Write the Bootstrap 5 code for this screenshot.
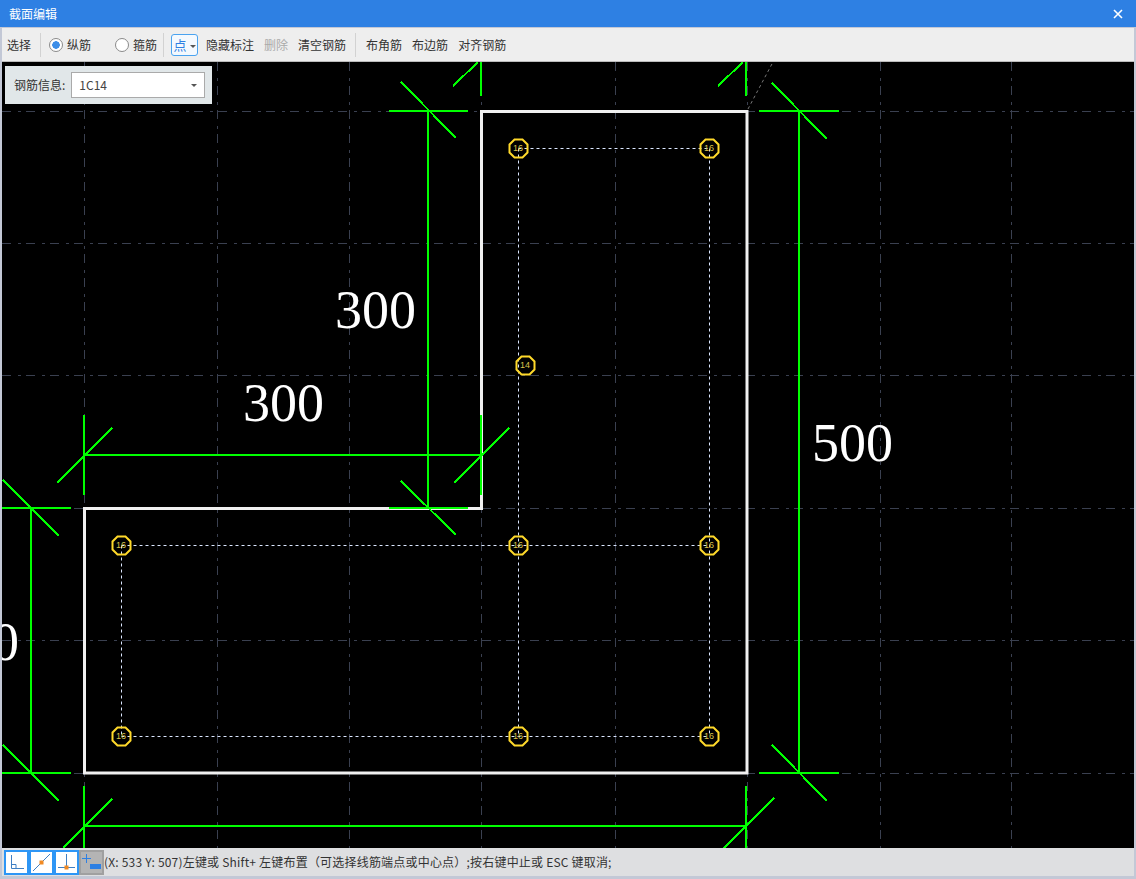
<!DOCTYPE html>
<html lang="zh-CN">

<head>
  <meta charset="UTF-8">
  <title>截面编辑</title>
  <link href="https://cdn.jsdelivr.net/npm/bootstrap@5.3.3/dist/css/bootstrap.min.css" rel="stylesheet">
  <script src="https://cdn.jsdelivr.net/npm/bootstrap@5.3.3/dist/js/bootstrap.bundle.min.js"></script>

  <style>
    html, body {
      height: 100%;
      overflow: hidden;
    }

    body {
      background-color: #c3c8d6;
      color: #333;
      font-family: "Noto Sans CJK SC", "Liberation Sans", sans-serif;
      font-size: 12px;
      line-height: 16px;
    }

    .win {
      height: 879px;
    }

    .win-title {
      height: 27px;
      padding: 0 9px;
      background-color: #2e80e3;
      color: #fff;
    }

    .win-close {
      width: 10px;
      height: 10px;
      margin-right: 4px;
    }

    .win-body {
      padding: 1px 2px 3px 2px;
      min-height: 0;
    }

    .tool-bar {
      height: 34px;
      background-color: #eee;
      border-bottom: 1px solid #bbb;
    }

    .tool-btn {
      border: 0;
      border-radius: 0;
      padding: 0 5px;
      font-size: 12px;
      line-height: 16px;
      color: #333;
      background: none;
    }

    .tool-btn:disabled {
      color: #aaa;
      opacity: 1;
    }

    .tool-sep {
      width: 1px;
      height: 24px;
      background-color: #d2d2d2;
    }

    .sep-radio {
      margin: 0 7px 0 6px;
    }

    .sep-place {
      margin: 0 5px 0 4px;
    }

    .tool-radio {
      width: 14px;
      height: 14px;
      margin: 0;
      border: 1px solid #8a8a8a;
      background-color: #fff;
    }

    .tool-radio:checked[type=radio] {
      border-color: #8a8a8a;
      background-color: #fff;
      background-image: radial-gradient(circle, #3d8ee8 0, #3d8ee8 3.5px, transparent 4px);
    }

    .point-btn {
      width: 27px;
      height: 22px;
      margin-right: 3px;
      padding: 0;
      border: 1px solid #4aa3f0;
      border-radius: 3px;
      font-size: 13px;
      line-height: 20px;
      color: #2e80e3;
      background-color: #f4f9fe;
    }

    .dropdown-toggle::after {
      margin-left: 3px;
      vertical-align: 2px;
      border-top: 3px solid #555;
      border-right: 3px solid transparent;
      border-left: 3px solid transparent;
      border-bottom: 0;
    }

    .cad-view {
      min-height: 0;
      background-color: #000;
    }

    .cad-view svg {
      display: block;
    }

    .cad-grid line {
      stroke: #3a4050;
      stroke-width: 1;
      stroke-dasharray: 9 7 3 5;
    }

    .cad-stirrup line {
      stroke: #dbe7ff;
      stroke-width: 1;
      stroke-dasharray: 3 3;
    }

    .cad-dim line {
      stroke: #0f0;
      stroke-width: 2;
      shape-rendering: crispEdges;
    }

    .cad-num {
      font-family: "Liberation Serif", serif;
      font-size: 54px;
      fill: #fff;
    }

    .cad-bar use {
      fill: none;
      stroke: #ffd92a;
      stroke-width: 2;
    }

    .cad-bar text {
      font-family: "Liberation Sans", sans-serif;
      font-size: 9px;
      fill: #d9c34a;
      text-anchor: middle;
    }

    .info-panel {
      top: 4px;
      left: 3px;
      width: 207px;
      height: 38px;
      padding-left: 9px;
      background-color: #e1e7e9;
    }

    .info-select {
      width: 134px;
      height: 26px;
      margin-left: 6px;
      padding: 0 7px;
      background-color: #fff;
      border: 1px solid #aaa;
      font-size: 12px;
      color: #444;
    }

    .status-bar {
      height: 28px;
      padding-left: 2px;
      background-color: #dedfe1;
    }

    .snap-btn {
      width: 25px;
      height: 25px;
      padding: 0;
      border: 2px solid #2e96f5;
      border-radius: 0;
      background-color: #fff;
    }

    .snap-btn svg {
      display: block;
      margin: auto;
    }

    .snap-off {
      background-color: #b4b4b4;
      border-color: #a0a0a0;
    }

    .status-text {
      white-space: nowrap;
      letter-spacing: .2px;
    }
  </style>
</head>

<body>
  <div class="win d-flex flex-column">
    <div class="win-title d-flex align-items-center justify-content-between flex-shrink-0">
      <span>截面编辑</span>
      <svg class="win-close" viewBox="0 0 10 10">
        <path d="M1 1 9 9M9 1 1 9" stroke="#fff" stroke-width="1.6" fill="none" />
      </svg>
    </div>

    <div class="win-body d-flex flex-column flex-grow-1">
      <div class="tool-bar d-flex align-items-center flex-shrink-0">
        <button class="tool-btn btn">选择</button>
        <span class="tool-sep ms-1"></span>
        <label class="d-flex align-items-center gap-1 ms-2">
          <input class="form-check-input tool-radio" type="radio" name="barType" checked>
          <span>纵筋</span>
        </label>
        <label class="d-flex align-items-center gap-1 ms-4">
          <input class="form-check-input tool-radio" type="radio" name="barType">
          <span>箍筋</span>
        </label>
        <span class="tool-sep sep-radio"></span>
        <button class="point-btn btn dropdown-toggle">点</button>
        <button class="tool-btn btn">隐藏标注</button>
        <button class="tool-btn btn" disabled>删除</button>
        <button class="tool-btn btn">清空钢筋</button>
        <span class="tool-sep sep-place"></span>
        <button class="tool-btn btn">布角筋</button>
        <button class="tool-btn btn">布边筋</button>
        <button class="tool-btn btn">对齐钢筋</button>
      </div>

      <div class="cad-view position-relative flex-grow-1">
        <!-- viewBox keeps the drawing in window coordinates -->
        <svg width="1132" height="786" viewBox="2 62 1132 786">
          <g class="cad-grid">
            <line x1="84.5" y1="62" x2="84.5" y2="848" />
            <line x1="217.5" y1="62" x2="217.5" y2="848" />
            <line x1="349.5" y1="62" x2="349.5" y2="848" />
            <line x1="481.5" y1="62" x2="481.5" y2="848" />
            <line x1="615.5" y1="62" x2="615.5" y2="848" />
            <line x1="747.5" y1="62" x2="747.5" y2="848" />
            <line x1="880.5" y1="62" x2="880.5" y2="848" />
            <line x1="1011.5" y1="62" x2="1011.5" y2="848" />
            <line x1="2" y1="111.5" x2="1134" y2="111.5" />
            <line x1="2" y1="243.5" x2="1134" y2="243.5" />
            <line x1="2" y1="375.5" x2="1134" y2="375.5" />
            <line x1="2" y1="508.5" x2="1134" y2="508.5" />
            <line x1="2" y1="640.5" x2="1134" y2="640.5" />
            <line x1="2" y1="773.5" x2="1134" y2="773.5" />
          </g>

          <line x1="748" y1="109" x2="773" y2="62" stroke="#777" stroke-dasharray="3 3" />

          <g class="cad-stirrup">
            <line x1="518.5" y1="148.5" x2="709.5" y2="148.5" />
            <line x1="518.5" y1="148.5" x2="518.5" y2="736.5" />
            <line x1="709.5" y1="148.5" x2="709.5" y2="736.5" />
            <line x1="121.5" y1="545.5" x2="709.5" y2="545.5" />
            <line x1="121.5" y1="736.5" x2="709.5" y2="736.5" />
            <line x1="121.5" y1="545.5" x2="121.5" y2="736.5" />
          </g>

          <path d="M84.5 508.5H481.5V111.5H747V773H84.5Z" fill="none" stroke="#f0f0f0" stroke-width="3" />

          <g class="cad-dim">
            <!-- 300 vertical -->
            <line x1="428" y1="111" x2="428" y2="508" />
            <line x1="389" y1="111" x2="468" y2="111" />
            <line x1="389" y1="508" x2="468" y2="508" />
            <line x1="401" y1="82" x2="456" y2="138" />
            <line x1="401" y1="481" x2="456" y2="535" />
            <!-- 300 horizontal -->
            <line x1="84" y1="455" x2="481" y2="455" />
            <line x1="84" y1="415" x2="84" y2="495" />
            <line x1="481" y1="415" x2="481" y2="495" />
            <line x1="57" y1="483" x2="112" y2="428" />
            <line x1="454" y1="483" x2="509" y2="428" />
            <!-- top stubs -->
            <line x1="481" y1="62" x2="481" y2="96" />
            <line x1="453" y1="86" x2="478" y2="62" />
            <line x1="746" y1="62" x2="746" y2="96" />
            <line x1="718" y1="86" x2="743" y2="62" />
            <!-- 500 right -->
            <line x1="799" y1="111" x2="799" y2="773" />
            <line x1="759" y1="111" x2="839" y2="111" />
            <line x1="759" y1="773" x2="839" y2="773" />
            <line x1="772" y1="83" x2="827" y2="139" />
            <line x1="772" y1="745" x2="827" y2="801" />
            <!-- left -->
            <line x1="31" y1="508" x2="31" y2="773" />
            <line x1="2" y1="508" x2="71" y2="508" />
            <line x1="2" y1="773" x2="71" y2="773" />
            <line x1="3" y1="480" x2="59" y2="536" />
            <line x1="3" y1="745" x2="59" y2="801" />
            <!-- bottom -->
            <line x1="84" y1="826" x2="746" y2="826" />
            <line x1="84" y1="786" x2="84" y2="848" />
            <line x1="746" y1="786" x2="746" y2="848" />
            <line x1="63" y1="848" x2="112" y2="799" />
            <line x1="719" y1="853" x2="774" y2="798" />
          </g>

          <text class="cad-num" x="335" y="328">300</text>
          <text class="cad-num" x="243" y="421">300</text>
          <text class="cad-num" x="812" y="461">500</text>
          <text class="cad-num" x="-62" y="660">500</text>

          <defs>
            <polygon id="barRing" points="-4,-9 4,-9 9,-4 9,4 4,9 -4,9 -9,4 -9,-4" />
          </defs>
          <g class="cad-bar">
            <use href="#barRing" x="518.5" y="148.5" /><text x="518" y="151">16</text>
            <use href="#barRing" x="709.5" y="148.5" /><text x="709" y="151">16</text>
            <use href="#barRing" x="121.5" y="545.5" /><text x="121" y="548">16</text>
            <use href="#barRing" x="518.5" y="545.5" /><text x="518" y="548">16</text>
            <use href="#barRing" x="709.5" y="545.5" /><text x="709" y="548">16</text>
            <use href="#barRing" x="121.5" y="736.5" /><text x="121" y="739">16</text>
            <use href="#barRing" x="518.5" y="736.5" /><text x="518" y="739">16</text>
            <use href="#barRing" x="709.5" y="736.5" /><text x="709" y="739">16</text>
            <use href="#barRing" x="525.5" y="365.5" /><text x="525" y="368">14</text>
          </g>
        </svg>

        <div class="info-panel position-absolute d-flex align-items-center">
          <label>钢筋信息:</label>
          <div class="info-select d-flex align-items-center justify-content-between dropdown-toggle">1C14</div>
        </div>
      </div>

      <div class="status-bar d-flex align-items-center flex-shrink-0">
        <button class="snap-btn btn">
          <svg width="17" height="17" viewBox="0 0 17 17">
            <path d="M3.5 1V14.5H16M3.5 10.5H8V14.5" fill="none" stroke="#3f7fc4" />
          </svg>
        </button>
        <button class="snap-btn btn">
          <svg width="19" height="19" viewBox="0 0 19 19">
            <path d="M1 18 18 1" stroke="#3f7fc4" />
            <rect x="7.5" y="7.5" width="4" height="4" fill="#f08a24" />
          </svg>
        </button>
        <button class="snap-btn btn">
          <svg width="19" height="19" viewBox="0 0 19 19">
            <path d="M9.5 1V14.5M1 14.5H18" stroke="#3f7fc4" />
            <rect x="7.5" y="12.5" width="4" height="4" fill="#f08a24" />
          </svg>
        </button>
        <button class="snap-btn snap-off btn">
          <svg width="21" height="19" viewBox="0 0 21 19">
            <path d="M5.5 1V10M1 5.5H10" stroke="#2e80e3" fill="none" />
            <rect x="9" y="11" width="11" height="5" fill="#2e80e3" />
          </svg>
        </button>
        <span class="status-text">(X: 533 Y: 507)左键或 Shift+ 左键布置（可选择线筋端点或中心点）;按右键中止或 ESC 键取消;</span>
      </div>
    </div>
  </div>
</body>

</html>
